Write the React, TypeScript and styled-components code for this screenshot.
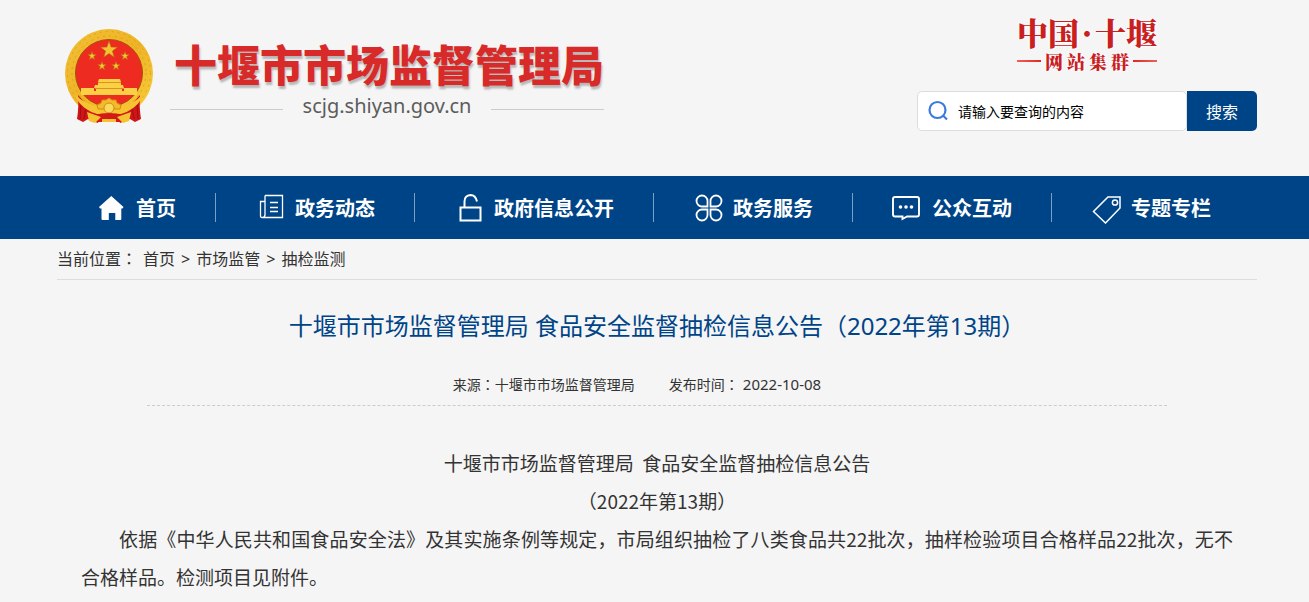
import React from 'react';
import styled, { createGlobalStyle } from 'styled-components';

const Global = createGlobalStyle`
  * { box-sizing: border-box; }
  body {
    margin: 0;
    background: #f5f5f5;
    color: #333;
    font-family: "Noto Sans", "Noto Sans CJK SC", sans-serif;
  }
  h1, h2, p, ul { margin: 0; padding: 0; font-weight: 400; }
  a { color: inherit; text-decoration: none; }
`;

const Wrap = styled.div`
  max-width: 1309px;
  margin: 0 auto;
  padding: 0 52px 0 57px;
`;

const HeaderRow = styled.header`
  display: flex;
  justify-content: space-between;
  height: 176px;
`;

const Brand = styled.a`
  display: flex;
  gap: 16px;
  padding: 28px 0 0 7px;
`;

const Emblem = styled.svg`
  width: 90px;
  height: 96px;
  flex: none;
`;

const BrandText = styled.div`
  width: 434px;
  padding-top: 4px;
`;

const BrandName = styled.div`
  display: flex;
  justify-content: flex-end;
  font: 900 43px/62px "Noto Sans CJK SC", sans-serif;
  color: #d92a2a;
  white-space: nowrap;
  text-shadow: 1px 3px 2px rgba(0, 0, 0, 0.25);
`;

const Domain = styled.div`
  display: flex;
  align-items: center;
  gap: 20px;
  font-size: 20px;
  line-height: 24px;
  color: #5c5c5c;

  &::before,
  &::after {
    content: "";
    flex: 1;
    height: 1px;
    margin-top: 6px;
    background: #ccc;
  }
`;

const Aside = styled.div`
  width: 340px;
`;

const Group = styled.div`
  width: 140px;
  height: 78px;
  margin: 13px 0 0 100px;
  color: #c9201f;
  white-space: nowrap;
`;

const GroupTitle = styled.div`
  display: flex;
  justify-content: space-between;
  font: 900 31px/38px "Noto Serif CJK SC", "Noto Sans CJK SC", serif;
  text-shadow: 0 0 3px #fff, 0 0 3px #fff;
`;

const GroupSub = styled.div`
  display: flex;
  align-items: center;
  justify-content: space-between;
  font: 900 18px/20px "Noto Serif CJK SC", "Noto Sans CJK SC", serif;
  text-shadow: 0 0 3px #fff, 0 0 3px #fff;

  &::before,
  &::after {
    content: "";
    width: 24px;
    height: 2px;
    background: linear-gradient(90deg, #f0605a, #dc2a22);
  }

  &::after {
    background: linear-gradient(270deg, #f0605a, #dc2a22);
  }
`;

const Search = styled.form`
  display: flex;
  height: 40px;
`;

const SearchBox = styled.label`
  display: flex;
  align-items: center;
  gap: 8px;
  flex: 1;
  padding-left: 10px;
  background: #fff;
  border: 1px solid #ddd;
  border-radius: 5px;
`;

const SearchInput = styled.input`
  flex: 1;
  min-width: 0;
  border: 0;
  outline: 0;
  padding: 0;
  background: transparent;
  font: 14px/20px "Noto Sans CJK SC", sans-serif;
  &::placeholder { color: #000; opacity: 1; }
`;

const SearchButton = styled.button`
  width: 70px;
  border: 0;
  border-radius: 0 5px 5px 0;
  background: #004488;
  color: #fff;
  font: 16px/24px "Noto Sans CJK SC", sans-serif;
`;

const Nav = styled.nav`
  background: #004488;
`;

const NavList = styled.ul`
  display: flex;
  list-style: none;
`;

const NavItem = styled.li`
  display: flex;
  align-items: center;
  height: 63px;

  & + &::before {
    content: "";
    width: 1px;
    height: 29px;
    background: #7f9fc2;
  }
`;

const NavLink = styled.a`
  display: flex;
  align-items: center;
  gap: 8px;
  padding: 0 39px;
  color: #fff;
  font: 700 20px/32px "Noto Sans CJK SC", sans-serif;
  white-space: nowrap;
`;

const Icon = styled.svg`
  width: 32px;
  height: 32px;
  flex: none;
  fill: none;
  stroke: #fff;
`;

const Crumbs = styled.nav`
  display: flex;
  gap: 6px;
  height: 41px;
  border-bottom: 1px solid #ddd;
  font-size: 16px;
  line-height: 40px;
`;

const Colon = styled.span`
  font-family: "Noto Sans CJK TC", sans-serif;
  line-height: 1;
`;

const Title = styled.h1`
  padding-top: 28px;
  color: #004488;
  font-size: 24px;
  line-height: 36px;
  text-align: center;
`;

const Meta = styled.div`
  display: flex;
  justify-content: center;
  gap: 34px;
  margin: 0 90px;
  padding: 31px 40px 10px 0;
  border-bottom: 1px dashed #ccc;
  font-size: 14px;
  line-height: 20px;
`;

const PublishDate = styled.time`
  margin-left: 4px;
  font-size: 15px;
  line-height: 1;
`;

const Body = styled.article`
  padding: 38px 24px 0;
  font-size: 19px;
  line-height: 38px;
  font-weight: 300;
  font-family: "Noto Sans CJK SC", sans-serif;
`;

const Line = styled.p<{ $center?: boolean }>`
  text-align: ${(p) => (p.$center ? 'center' : 'justify')};
  text-indent: ${(p) => (p.$center ? '0' : '2em')};
`;

const star = (cx: number, cy: number, r: number) =>
  Array.from({ length: 10 }, (_, i) => {
    const a = (Math.PI / 5) * i - Math.PI / 2;
    const q = i % 2 ? r * 0.4 : r;
    return `${cx + q * Math.cos(a)},${cy + q * Math.sin(a)}`;
  }).join(' ');

const icons: Record<string, React.ReactNode> = {
  home: (
    <path fill="#fff" stroke="none" d="M15.300 4 27.500 15 26.500 16.500H25.300V27q0 1-1 1h-5v-7h-6.500v7H6.500q-1 0-1-1V16.500H4L3 15Z" />
  ),
  news: (
    <path strokeWidth="1.300" d="M10 3.500h17.500v22H7q-1.500 0-1.500-1.500V9.500H10M10 3.500V22.500q0 3-2.500 3M15 10.500h8M15 15.500h8M15 19.500h8" />
  ),
  lock: <path strokeWidth="2" d="M6.500 15.500h20v13h-20zM10.500 15V9.500q0-6 6-6.500 5 0 6.500 6.500" />,
  clover: (
    <path strokeWidth="1.800" d="M14.500 14.500H9A5.500 5.500 0 1 1 14.500 9ZM17.500 14.500V9A5.500 5.500 0 1 1 23 14.500ZM14.500 17.500V23A5.500 5.500 0 1 1 9 17.500ZM17.500 17.500H23A5.500 5.500 0 1 1 17.500 23Z" />
  ),
  chat: (
    <>
      <path strokeWidth="1.900" d="M3 5h22q2 0 2 2v15.500q0 2-2 2H15L10.500 27v-2.500H3q-2 0-2-2V7q0-2 2-2Z" />
      <g fill="#fff" stroke="none">
        <circle cx="8.500" cy="15" r="1.800" /><circle cx="14" cy="15" r="1.800" /><circle cx="19.500" cy="15" r="1.800" />
      </g>
    </>
  ),
  tag: (
    <>
      <path strokeWidth="1.500" d="M17 5h12v11L14.500 31 2.500 19.500Z" />
      <circle cx="24" cy="10.500" r="2.600" strokeWidth="1.500" />
    </>
  ),
};

const navItems = [
  ['home', '首页'],
  ['news', '政务动态'],
  ['lock', '政府信息公开'],
  ['clover', '政务服务'],
  ['chat', '公众互动'],
  ['tag', '专题专栏'],
];

function NationalEmblem() {
  return (
    <Emblem viewBox="0 0 90 96" aria-hidden="true">
      <defs>
        <linearGradient id="gold" x1="0" y1="0" x2="1" y2="1">
          <stop offset="0" stopColor="#f3c035" />
          <stop offset=".5" stopColor="#eeb325" />
          <stop offset="1" stopColor="#f9cf3c" />
        </linearGradient>
      </defs>
      <ellipse cx="45" cy="45.500" rx="44" ry="44.500" fill="url(#gold)" />
      <g fill="none" stroke="#d39a1e" strokeDasharray="2 4" opacity=".7">
        <circle cx="45" cy="45" r="41.500" />
        <circle cx="45" cy="45" r="37" />
      </g>
      <circle cx="45" cy="45" r="33.500" fill="#ee2b20" stroke="#a8500f" />
      <g fill="#f4c331" stroke="#b9610f" strokeWidth=".6">
        <polygon points={star(45, 22, 9)} />
        <polygon points={star(28, 28, 4.5)} />
        <polygon points={star(61, 28, 4.5)} />
        <polygon points={star(38, 38, 4.5)} />
        <polygon points={star(52, 38, 4.5)} />
      </g>
      <path fill="#fbd047" d="M35 51h21l1 3H34ZM34 54h23v3H34ZM31 57h28l1 3h-2v3H32v-3h-2ZM17 60h13v3h30v-3h13v7H17Z" />
      <path stroke="#d79619" d="M34 54.500h23M31 60.500h29" />
      <path fill="#cf1517" d="M14 67 24 78l14 6-4 11-10-4-5 3-6-3Q15 78 14 67ZM76 67 66 78l-14 6 4 11 10-4 5 3 6-3Q75 78 76 67Z" />
      <path fill="none" stroke="#9c1014" d="M17 76l-1 15M22 79l-2 12M73 76l1 15M68 79l2 12" />
      <path fill="#f6c431" d="M11 66q9 10 22 12 12 2 24 0 13-2 22-12l-1 4Q71 82 57 86l-12 1-12-1Q19 82 12 70Z" />
      <path fill="#f3bb2c" stroke="#d18b13" d="m45 70 3 2 4 0 1 3 4 2-1 4H34l-1-4 4-2 1-3 4 0Z" />
      <circle cx="45" cy="80" r="5" fill="#fbd95b" stroke="#d18b13" />
      <path fill="#d41a19" d="M30 87q15-4 30 0l-3 7H33Z" />
      <path fill="#f5c230" d="M23 84l14 5-6 6-6-2ZM67 84l-14 5 6 6 6-2ZM38 91h14v3H38Z" />
    </Emblem>
  );
}

export default function App() {
  return (
    <>
      <Global />
      <Wrap>
        <HeaderRow>
          <Brand href="#">
            <NationalEmblem />
            <BrandText>
              <BrandName>十堰市市场监督管理局</BrandName>
              <Domain>scjg.shiyan.gov.cn</Domain>
            </BrandText>
          </Brand>
          <Aside>
            <Group>
              <GroupTitle>
                <span>中国</span>
                <span>·</span>
                <span>十堰</span>
              </GroupTitle>
              <GroupSub>
                {Array.from('网站集群').map((c) => <span key={c}>{c}</span>)}
              </GroupSub>
            </Group>
            <Search onSubmit={(e) => e.preventDefault()}>
              <SearchBox>
                <svg width="22" height="22" viewBox="0 0 22 22" fill="none" stroke="#3b7bdc" strokeWidth="2.200" aria-hidden="true">
                  <circle cx="9.500" cy="10" r="8" />
                  <path d="m15 15.500 4 4" />
                </svg>
                <SearchInput aria-label="搜索内容" placeholder="请输入要查询的内容" />
              </SearchBox>
              <SearchButton type="submit">搜索</SearchButton>
            </Search>
          </Aside>
        </HeaderRow>
      </Wrap>
      <Nav>
        <Wrap>
          <NavList>
            {navItems.map(([icon, label]) => (
              <NavItem key={label}>
                <NavLink href="#">
                  <Icon viewBox="0 0 32 32" aria-hidden="true">{icons[icon]}</Icon>
                  {label}
                </NavLink>
              </NavItem>
            ))}
          </NavList>
        </Wrap>
      </Nav>
      <Wrap as="main">
        <Crumbs>
          <span>当前位置<Colon>：</Colon></span>
          <a href="#">首页</a>
          <span>&gt;</span>
          <a href="#">市场监管</a>
          <span>&gt;</span>
          <a href="#">抽检监测</a>
        </Crumbs>
        <Title>十堰市市场监督管理局 食品安全监督抽检信息公告（2022年第13期）</Title>
        <Meta>
          <span>来源<Colon>：</Colon>十堰市市场监督管理局</span>
          <span>发布时间<Colon>：</Colon><PublishDate>2022-10-08</PublishDate></span>
        </Meta>
        <Body>
          <Line $center>十堰市市场监督管理局&nbsp; 食品安全监督抽检信息公告</Line>
          <Line $center>（2022年第13期）</Line>
          <Line>依据《中华人民共和国食品安全法》及其实施条例等规定，市局组织抽检了八类食品共22批次，抽样检验项目合格样品22批次，无不合格样品。检测项目见附件。</Line>
        </Body>
      </Wrap>
    </>
  );
}
